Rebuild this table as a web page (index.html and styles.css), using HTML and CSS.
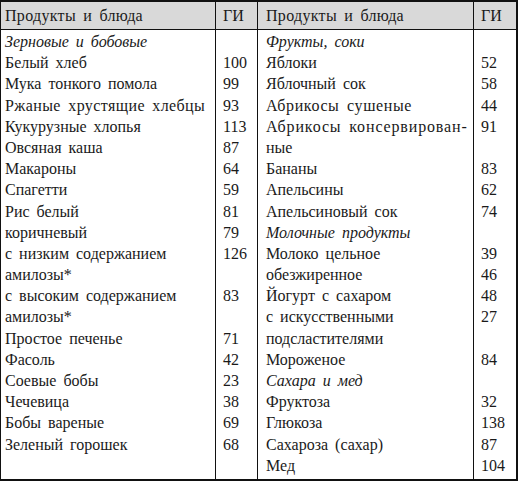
FILE: index.html
```html
<!DOCTYPE html>
<html lang="ru">
<head>
<meta charset="utf-8">
<link rel="stylesheet" href="styles.css">
</head>
<body>
<div class="gi-table">
  <div class="cell head name">Продукты и блюда</div>
  <div class="cell head num">ГИ</div>
  <div class="cell head name right">Продукты и блюда</div>
  <div class="cell head num last">ГИ</div>

  <div class="cell body name">
    <div class="line cat">Зерновые и бобовые</div>
    <div class="line">Белый хлеб</div>
    <div class="line">Мука тонкого помола</div>
    <div class="line spread-s">Ржаные хрустящие хлебцы</div>
    <div class="line">Кукурузные хлопья</div>
    <div class="line">Овсяная каша</div>
    <div class="line">Макароны</div>
    <div class="line">Спагетти</div>
    <div class="line">Рис белый</div>
    <div class="line">коричневый</div>
    <div class="line">с низким содержанием</div>
    <div class="line">амилозы*</div>
    <div class="line">с высоким содержанием</div>
    <div class="line">амилозы*</div>
    <div class="line">Простое печенье</div>
    <div class="line">Фасоль</div>
    <div class="line">Соевые бобы</div>
    <div class="line">Чечевица</div>
    <div class="line">Бобы вареные</div>
    <div class="line">Зеленый горошек</div>
  </div>
  <div class="cell body num">
    <div class="line"></div>
    <div class="line">100</div>
    <div class="line">99</div>
    <div class="line">93</div>
    <div class="line">113</div>
    <div class="line">87</div>
    <div class="line">64</div>
    <div class="line">59</div>
    <div class="line">81</div>
    <div class="line">79</div>
    <div class="line">126</div>
    <div class="line"></div>
    <div class="line">83</div>
    <div class="line"></div>
    <div class="line">71</div>
    <div class="line">42</div>
    <div class="line">23</div>
    <div class="line">38</div>
    <div class="line">69</div>
    <div class="line">68</div>
  </div>
  <div class="cell body name right">
    <div class="line cat">Фрукты, соки</div>
    <div class="line">Яблоки</div>
    <div class="line">Яблочный сок</div>
    <div class="line spread-m">Абрикосы сушеные</div>
    <div class="line spread-l">Абрикосы консервирован-</div>
    <div class="line">ные</div>
    <div class="line">Бананы</div>
    <div class="line">Апельсины</div>
    <div class="line">Апельсиновый сок</div>
    <div class="line cat">Молочные продукты</div>
    <div class="line">Молоко цельное</div>
    <div class="line">обезжиренное</div>
    <div class="line">Йогурт с сахаром</div>
    <div class="line">с искусственными</div>
    <div class="line">подсластителями</div>
    <div class="line">Мороженое</div>
    <div class="line cat">Сахара и мед</div>
    <div class="line">Фруктоза</div>
    <div class="line">Глюкоза</div>
    <div class="line">Сахароза (сахар)</div>
    <div class="line">Мед</div>
  </div>
  <div class="cell body num last">
    <div class="line"></div>
    <div class="line">52</div>
    <div class="line">58</div>
    <div class="line">44</div>
    <div class="line">91</div>
    <div class="line"></div>
    <div class="line">83</div>
    <div class="line">62</div>
    <div class="line">74</div>
    <div class="line"></div>
    <div class="line">39</div>
    <div class="line">46</div>
    <div class="line">48</div>
    <div class="line">27</div>
    <div class="line"></div>
    <div class="line">84</div>
    <div class="line"></div>
    <div class="line">32</div>
    <div class="line">138</div>
    <div class="line">87</div>
    <div class="line">104</div>
  </div>
</div>
</body>
</html>
```

FILE: styles.css
```css
html, body {
  margin: 0;
  padding: 0;
  background: #fff;
}

.gi-table {
  box-sizing: border-box;
  width: 518px;
  height: 481px;
  border: 2px solid #111;
  border-left-width: 1px;
  display: grid;
  grid-template-columns: 215px 42px 216px 1fr;
  grid-template-rows: 28px 1fr;
  font-family: "Liberation Serif", "Times New Roman", serif;
  font-size: 16px;
  color: #1a1a1a;
  word-spacing: 3px;
}

.cell {
  border-right: 1px solid #111;
}

.cell.last {
  border-right: none;
}

.head {
  background: #d9d9d9;
  border-bottom: 1px solid #111;
  display: flex;
  align-items: center;
}

.name {
  padding-left: 4px;
}

.head.name {
  letter-spacing: 0.3px;
}

.name.right {
  padding-left: 8px;
}

.num {
  padding-left: 7px;
}

.body {
  padding-top: 1px;
}

.line {
  height: 21.2px;
  line-height: 21.2px;
  white-space: nowrap;
}

.spread-s {
  letter-spacing: 0.4px;
}

.spread-m {
  letter-spacing: 0.6px;
}

.spread-l {
  letter-spacing: 0.85px;
}

.cat {
  font-style: italic;
}
```
